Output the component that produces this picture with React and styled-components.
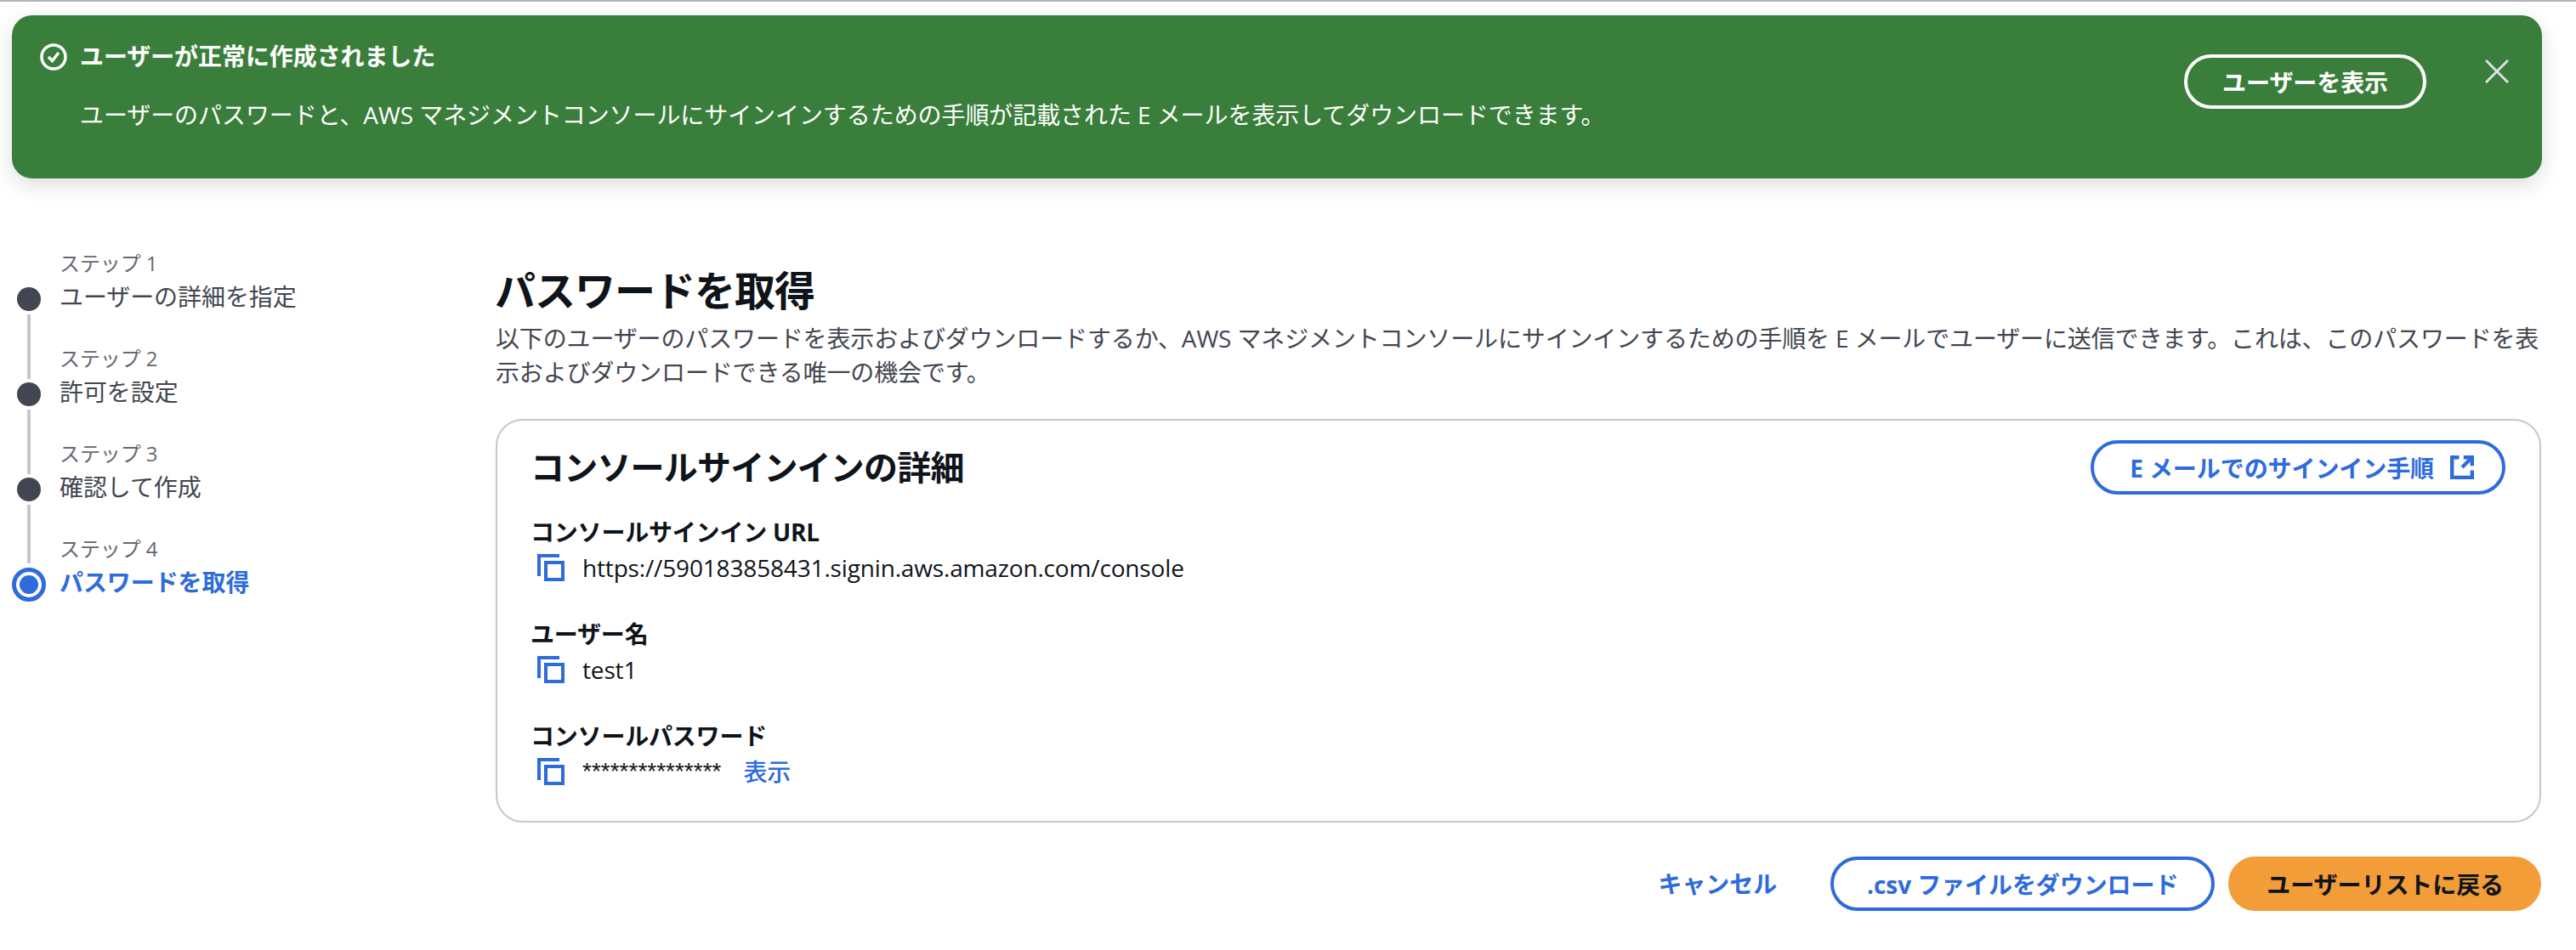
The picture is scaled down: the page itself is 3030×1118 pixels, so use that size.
import React from 'react'
import styled, { createGlobalStyle } from 'styled-components'

const GlobalStyle = createGlobalStyle`
  body {
    margin: 0;
    background: #fff;
    color: #0f141a;
    font-family: 'Open Sans', 'Noto Sans CJK JP', sans-serif;
    font-size: 28px;
    line-height: 40px;
    letter-spacing: -0.08px;
  }
`

const TopRule = styled.div`
  height: 2px;
  background: #b4b4bb;
`

const Banner = styled.div`
  display: flex;
  align-items: flex-start;
  height: 192px;
  box-sizing: border-box;
  margin: 16px 40px 0 14px;
  padding: 28px 39px 0 33px;
  border-radius: 24px;
  background: #3a7e3b;
  color: #fff;
  box-shadow: 0 8px 24px rgba(15, 20, 26, 0.14);
`

const BannerIcon = styled.svg`
  flex: none;
  width: 32px;
  height: 32px;
  margin-top: 5px;
`

const BannerText = styled.div`
  flex: 1;
  margin-left: 15px;
`

const BannerTitle = styled.div`
  font-weight: 700;
`

const BannerBody = styled.div`
  margin-top: 29px;
`

const Pill = styled.button`
  flex: none;
  height: 64px;
  box-sizing: border-box;
  padding: 0 ${(p) => p.$right ?? 40}px 0 ${(p) => p.$left ?? 40}px;
  display: inline-flex;
  align-items: center;
  gap: 19px;
  border-radius: 32px;
  border: 4px solid ${(p) => p.$color};
  background: ${(p) => p.$fill || 'transparent'};
  color: ${(p) => p.$text || p.$color};
  font-family: inherit;
  font-size: 28px;
  font-weight: 700;
  letter-spacing: inherit;
`

const BannerAction = styled(Pill)`
  margin-top: 18px;
`

const CloseIcon = styled.svg`
  flex: none;
  width: 28px;
  height: 28px;
  margin: 24px 0 0 69px;
`

const Layout = styled.div`
  display: flex;
  margin-top: 48px;
  padding: 0 41px 0 14px;
`

const Sidebar = styled.ol`
  flex: none;
  width: 569px;
  margin: 0;
  padding: 0;
  list-style: none;
`

const Step = styled.li`
  display: flex;
  height: ${(p) => (p.$active ? 114 : 112)}px;
`

const Rail = styled.div`
  flex: none;
  width: 40px;
  display: flex;
  flex-direction: column;
  align-items: center;
  padding-bottom: ${(p) => (p.$active ? 0 : 4)}px;
  box-sizing: border-box;
`

const Connector = styled.div`
  flex: 1;
  width: 4px;
  margin-bottom: ${(p) => (p.$active ? 5 : 4)}px;
  background: ${(p) => (p.$hidden ? 'transparent' : '#c6c6cd')};
`

const Dot = styled.div`
  flex: none;
  width: 28px;
  height: 28px;
  border-radius: 50%;
  background: #424650;
`

const ActiveDot = styled.div`
  flex: none;
  width: 40px;
  height: 40px;
  box-sizing: border-box;
  border: 5px solid #2e6bdc;
  border-radius: 50%;
  display: flex;
  align-items: center;
  justify-content: center;

  &::after {
    content: '';
    width: 22px;
    height: 22px;
    border-radius: 50%;
    background: #2e6bdc;
  }
`

const StepText = styled.div`
  margin-left: 16px;
  padding-top: 36px;
`

const StepLabel = styled.div`
  font-size: 24px;
  line-height: 32px;
  color: #656871;
`

const StepName = styled.div`
  margin-top: 3px;
  color: ${(p) => (p.$active ? '#2e6bdc' : '#424650')};
  font-weight: ${(p) => (p.$active ? 700 : 400)};
`

const Main = styled.main`
  flex: 1;
  padding-top: 54px;
`

const PageTitle = styled.h1`
  margin: 0 0 0 -1px;
  font-size: 48px;
  line-height: 60px;
  font-weight: 700;
  letter-spacing: -1px;
`

const Description = styled.p`
  margin: 6px 0 0;
  color: #424650;
  letter-spacing: -0.14px;
`

const Card = styled.section`
  height: 475px;
  box-sizing: border-box;
  margin-top: 35px;
  padding: 23px 40px 0 39px;
  border: 2px solid #c6c6cd;
  border-radius: 32px;
`

const CardHeader = styled.div`
  display: flex;
  align-items: center;
  justify-content: space-between;
  height: 64px;
`

const CardTitle = styled.h2`
  margin: 0;
  font-size: 40px;
  line-height: 48px;
  font-weight: 700;
  letter-spacing: -0.8px;
`

const Fields = styled.div`
  display: flex;
  flex-direction: column;
  gap: 38px;
  margin-top: 24px;
`

const FieldLabel = styled.div`
  font-weight: 700;
  letter-spacing: -0.2px;
`

const FieldValue = styled.div`
  display: flex;
  align-items: center;
  margin-top: 2px;
  letter-spacing: -0.16px;
`

const CopyIcon = styled.svg`
  flex: none;
  width: 32px;
  height: 32px;
  margin: 0 21px 0 8px;
`

const Masked = styled.span`
  font-family: 'Liberation Sans', sans-serif;
  letter-spacing: 0;
`

const Reveal = styled.a`
  margin-left: 26px;
  color: #2e6bdc;
  font-weight: 500;
`

const LinkIcon = styled.svg`
  flex: none;
  width: 28px;
  height: 28px;
`

const Footer = styled.div`
  display: flex;
  align-items: center;
  justify-content: flex-end;
  margin-top: 40px;
`

const CancelLink = styled.a`
  margin-right: 63px;
  color: #2e6bdc;
  font-weight: 700;
`

const DownloadButton = styled(Pill)`
  margin-right: 16px;
`

const Copy = () => (
  <CopyIcon viewBox="0 0 32 32" fill="none" stroke="#2e6bdc" strokeWidth="4">
    <path d="M26 2H2v24" />
    <rect x="10" y="10" width="20" height="20" />
  </CopyIcon>
)

const steps = [
  { label: 'ステップ 1', name: 'ユーザーの詳細を指定' },
  { label: 'ステップ 2', name: '許可を設定' },
  { label: 'ステップ 3', name: '確認して作成' },
  { label: 'ステップ 4', name: 'パスワードを取得', active: true },
]

const App = () => (
  <>
    <GlobalStyle />
    <TopRule />
    <Banner>
      <BannerIcon viewBox="0 0 32 32" fill="none" stroke="#fff" strokeWidth="3.5">
        <circle cx="16" cy="16" r="14" />
        <path d="M10 16l4.5 4.5L22 11" />
      </BannerIcon>
      <BannerText>
        <BannerTitle>ユーザーが正常に作成されました</BannerTitle>
        <BannerBody>
          ユーザーのパスワードと、AWS マネジメントコンソールにサインインするための手順が記載された E メールを表示してダウンロードできます。
        </BannerBody>
      </BannerText>
      <BannerAction $color="#fff" $left={41} $right={41}>ユーザーを表示</BannerAction>
      <CloseIcon viewBox="0 0 28 28" fill="none" stroke="#dedee3" strokeWidth="3">
        <path d="M1 1l26 26M27 1L1 27" />
      </CloseIcon>
    </Banner>
    <Layout>
      <Sidebar>
        {steps.map((step, i) => (
          <Step key={step.label} $active={step.active}>
            <Rail $active={step.active}>
              <Connector $hidden={i === 0} $active={step.active} />
              {step.active ? <ActiveDot /> : <Dot />}
            </Rail>
            <StepText>
              <StepLabel>{step.label}</StepLabel>
              <StepName $active={step.active}>{step.name}</StepName>
            </StepText>
          </Step>
        ))}
      </Sidebar>
      <Main>
        <PageTitle>パスワードを取得</PageTitle>
        <Description>
          以下のユーザーのパスワードを表示およびダウンロードするか、AWS マネジメントコンソールにサインインするための手順を E メールでユーザーに送信できます。これは、このパスワードを表示およびダウンロードできる唯一の機会です。
        </Description>
        <Card>
          <CardHeader>
            <CardTitle>コンソールサインインの詳細</CardTitle>
            <Pill $color="#2e6bdc" $left={42} $right={33}>
              E メールでのサインイン手順
              <LinkIcon viewBox="0 0 16 16" fill="none" stroke="#2e6bdc" strokeWidth="2.5">
                <path d="M6 1.25H1.25v13.5h13.5V10" />
                <path d="M9 1.25h5.75V7" />
                <path d="M14.75 1.25L8 8" />
              </LinkIcon>
            </Pill>
          </CardHeader>
          <Fields>
            <div>
              <FieldLabel>コンソールサインイン URL</FieldLabel>
              <FieldValue>
                <Copy />
                https://590183858431.signin.aws.amazon.com/console
              </FieldValue>
            </div>
            <div>
              <FieldLabel>ユーザー名</FieldLabel>
              <FieldValue>
                <Copy />
                test1
              </FieldValue>
            </div>
            <div>
              <FieldLabel>コンソールパスワード</FieldLabel>
              <FieldValue>
                <Copy />
                <Masked>***************</Masked>
                <Reveal>表示</Reveal>
              </FieldValue>
            </div>
          </Fields>
        </Card>
        <Footer>
          <CancelLink>キャンセル</CancelLink>
          <DownloadButton $color="#2e6bdc" $left={39} $right={39}>.csv ファイルをダウンロード</DownloadButton>
          <Pill $color="#f29d38" $fill="#f29d38" $text="#0f141a" $left={41}>ユーザーリストに戻る</Pill>
        </Footer>
      </Main>
    </Layout>
  </>
)

export default App
